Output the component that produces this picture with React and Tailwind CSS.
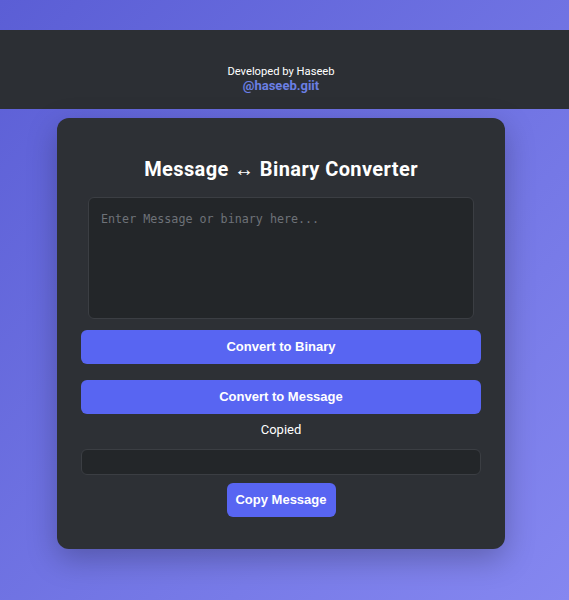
export default function App() {
  return (
    <div className="min-h-screen w-full bg-gradient-to-br from-[#5b5ed5] to-[#8587f0] pt-[30px] pb-[51px] font-['Roboto',sans-serif]">
      {/* HEADER */}
      <div className="h-[79px] bg-[#2c2f34] pr-[7px] flex flex-col items-center justify-end pb-[15px]">
        <div className="text-[11.2px] leading-[14px] text-white">Developed by Haseeb</div>
        <div className="-mt-[1px] text-[13px] leading-[16px] font-bold text-[#6b7fe4]">@haseeb.giit</div>
      </div>

      {/* CARD */}
      <div className="pr-[7px]">
        <div className="mx-auto mt-[9px] w-[448px] rounded-xl bg-[#2d3035] px-[24px] pt-[38px] pb-[32px] shadow-[0_10px_30px_rgba(0,0,0,0.25)]">
          <h1 className="text-center text-[20px] leading-[26px] font-bold tracking-[0.4px] text-white">
            Message ↔ Binary Converter
          </h1>
          <textarea
            placeholder="Enter Message or binary here..."
            className="mt-[15px] mx-[7px] block h-[122px] w-[386px] resize-none rounded-md border border-[#3b3e43] bg-[#232629] px-[12px] pt-[13px] pb-[10px] text-[11.7px] text-white placeholder:text-[#6e7278] font-['DejaVu_Sans_Mono',monospace] outline-none"
          />
          <button className="mt-[11px] block h-[34px] w-full rounded-md bg-[#5865f2] text-[13px] font-bold text-white font-['Liberation_Sans',sans-serif]">
            Convert to Binary
          </button>
          <button className="mt-[16px] block h-[34px] w-full rounded-md bg-[#5865f2] text-[13px] font-bold text-white font-['Liberation_Sans',sans-serif]">
            Convert to Message
          </button>
          <div className="mt-[7px] text-center text-[13px] leading-[18px] text-white">Copied</div>
          <div className="mt-[10px] h-[26px] w-full rounded-md border border-[#3b3e43] bg-[#232629]" />
          <div className="mt-[8px] flex justify-center">
            <button className="h-[34px] w-[109px] rounded-md bg-[#5865f2] text-[13px] font-bold text-white font-['Liberation_Sans',sans-serif]">
              Copy Message
            </button>
          </div>
        </div>
      </div>
    </div>
  );
}
